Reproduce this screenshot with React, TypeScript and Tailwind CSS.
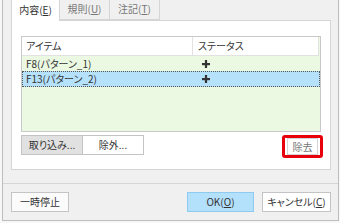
export default function App() {
  const font = { fontFamily: '"Noto Sans CJK JP", "Noto Sans", sans-serif' };

  return (
    <div
      className="w-[340px] h-[223px] bg-[#f7f7f7] pl-[2px] pr-[1px] pb-[2px] text-[10px] leading-none text-[#333] [font-feature-settings:'palt']"
      style={font}
    >
      <div className="h-full border-x border-b border-[#bdbdbd] bg-[#f0f0f0] flex flex-col">
        {/* tabs + panel */}
        <div className="pl-[8px]">
          <div className="flex h-[21px] relative z-10">
            <div className="w-[49px] h-[21px] bg-white border-x border-[#d5d5d5] flex items-center justify-center pb-[2px]">
              内容(<span className="underline">E</span>)
            </div>
            <div className="w-[50px] h-[20px] border-r border-b border-[#d5d5d5] flex items-center justify-center text-[#777] pb-[1px]">
              規則(<span className="underline">U</span>)
            </div>
            <div className="w-[50px] h-[20px] border-r border-b border-[#d5d5d5] flex items-center justify-center text-[#777] pb-[1px]">
              注記(<span className="underline">T</span>)
            </div>
          </div>
          <div className="-mt-[1px] w-[320px] h-[150px] border border-[#d5d5d5] bg-white pt-[15px] px-[9px]">
            {/* list */}
            <div className="h-[96px] border border-[#c9c9c9] bg-[#ecf9e2] flex flex-col">
              <div className="h-[19px] bg-white flex border-b border-[#e2e2e2] mr-[1px]">
                <div className="w-[171px] border-r border-[#e2e2e2] flex items-center pl-[4px]">アイテム</div>
                <div className="flex-1 border-r border-[#e2e2e2] flex items-center pl-[5px]">ステータス</div>
              </div>
              <div className="h-[15px] flex">
                <div className="w-[171px] flex items-center pl-[4px]">F8(パターン_1)</div>
                <div className="flex-1 flex items-center pl-[9px]">
                  <Plus />
                </div>
              </div>
              <div className="h-[16px] flex bg-[#b5e1fb] border border-dotted border-[#555]">
                <div className="w-[170px] flex items-center pl-[3px]">F13(パターン_2)</div>
                <div className="flex-1 flex items-center pl-[9px]">
                  <Plus />
                </div>
              </div>
            </div>
            {/* buttons */}
            <div className="mt-[3px] flex items-start">
              <button className="w-[62px] h-[20px] border border-[#c4c4c4] bg-[#e1e1e1] flex items-center justify-center">
                取り込み...
              </button>
              <button className="w-[62px] h-[20px] -ml-[1px] border border-[#c4c4c4] bg-white flex items-center justify-center">
                除外...
              </button>
              <div className="ml-auto mr-[-2px] w-[41px] h-[23px] border-[3px] border-[#e8000b] rounded-[3px] bg-white flex items-start justify-center pt-[0px]">
                <div className="w-[31px] h-[17px] border border-[#d4d4d4] flex items-center justify-center text-[#777]">
                  除去
                </div>
              </div>
            </div>
          </div>
        </div>

        <div className="mt-[13px] h-px bg-[#d6d6d6]" />

        <div className="pt-[8px] pl-[8px] pr-[7px] flex">
          <button className="w-[58px] h-[20px] border border-[#c4c4c4] bg-[#fbfbfb] flex items-center justify-center">
            一時停止
          </button>
          <button className="ml-auto w-[67px] h-[20px] border border-[#8fcbf0] bg-[#b3e0fb] flex items-center justify-center">
            OK(<span className="underline">O</span>)
          </button>
          <button className="ml-[8px] w-[69px] h-[20px] border border-[#c4c4c4] bg-white flex items-center justify-center">
            キャンセル(<span className="underline">C</span>)
          </button>
        </div>
      </div>
    </div>
  );
}

function Plus() {
  return (
    <svg width="8" height="8" viewBox="0 0 8 8">
      <rect x="0" y="3" width="8" height="2.2" fill="#333" />
      <rect x="2.9" y="0" width="2.2" height="8" fill="#333" />
    </svg>
  );
}
